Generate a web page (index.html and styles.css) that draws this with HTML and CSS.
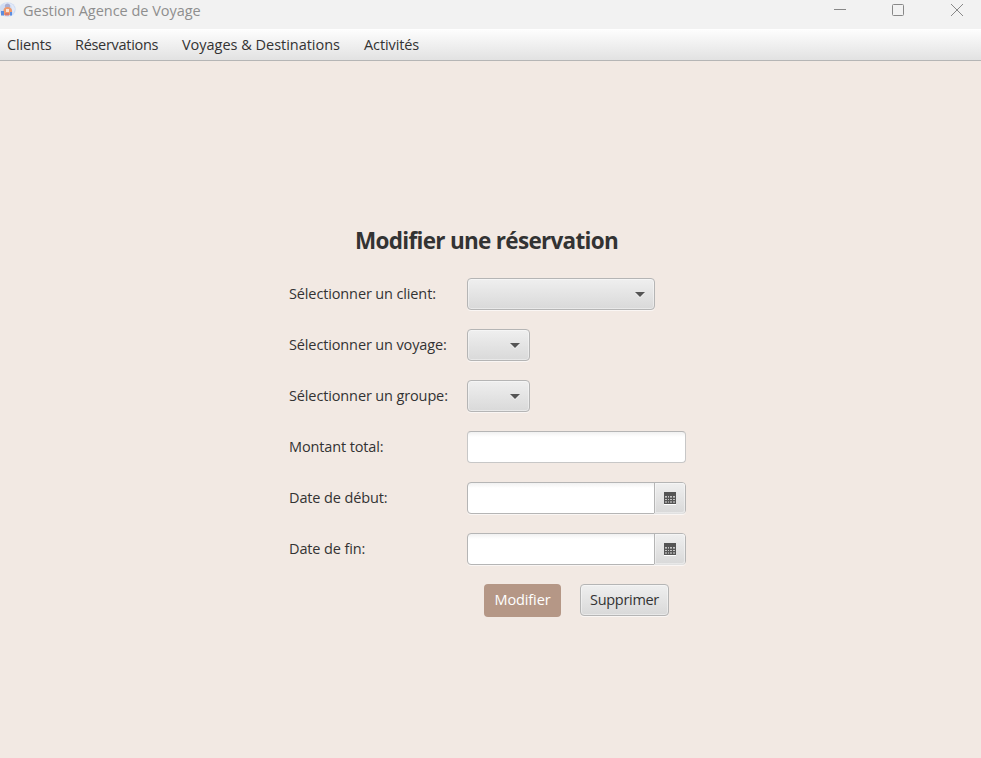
FILE: index.html
```
<!DOCTYPE html>
<html lang="fr">
<head>
<meta charset="utf-8">
<title>Gestion Agence de Voyage</title>
<link rel="stylesheet" href="styles.css">
</head>
<body>
<header class="titlebar">
  <svg class="app-icon" width="16" height="18" viewBox="0 0 16 18">
    <ellipse cx="7.500" cy="9.500" rx="8.200" ry="7.300" fill="#cfdcf3"/>
    <path d="M3 4.500Q8 1.500 13 5L15 9L13 14L11 5Z" fill="#e3e9f7"/>
    <circle cx="7.500" cy="6" r="2.600" fill="#a9aed2"/>
    <path d="M3.500 10Q4 7 7.500 7T12 10V15H3.500Z" fill="#ef9a6d"/>
    <path d="M6 9H9V12H6Z" fill="#f8e3da"/>
    <path d="M1 11H4V15.500H1ZM10 12H12V15.500H10Z" fill="#5b8de0"/>
    <path d="M5 13H9V15.500H5Z" fill="#d77870"/>
  </svg>
  <span class="app-title">Gestion Agence de Voyage</span>
  <svg class="window-controls" width="140" height="22" viewBox="0 0 140 22" fill="none" stroke="#888">
    <path d="M4 9.500H16"/>
    <rect x="62.500" y="4.500" width="11" height="11" rx="1"/>
    <path d="M121 4L133 16M133 4L121 16"/>
  </svg>
</header>
<nav class="menubar">
  <span class="menu clients">Clients</span>
  <span class="menu reservations">Réservations</span>
  <span class="menu voyages">Voyages &amp; Destinations</span>
  <span class="menu activites">Activités</span>
</nav>
<main class="content">
  <h1 class="heading">Modifier une réservation</h1>
  <form class="form">
    <label class="label">Sélectionner un client:</label>
    <div class="combo wide"><i class="arrow"></i></div>
    <label class="label">Sélectionner un voyage:</label>
    <div class="combo"><i class="arrow"></i></div>
    <label class="label">Sélectionner un groupe:</label>
    <div class="combo"><i class="arrow"></i></div>
    <label class="label">Montant total:</label>
    <div class="field"></div>
    <label class="label">Date de début:</label>
    <div class="field date"><div class="picker"><svg width="12" height="13" viewBox="0 0 12 13" shape-rendering="crispEdges"><path fill="#fff" d="M0 12h12v1H0z"/><path fill="#555" d="M0 0h12v12H0z"/><path fill="#c4c4c4" d="M1 4h2v1H1zM4 4h1v1H4zM6 4h2v1H6zM9 4h2v1H9zM1 7h2v1H1zM4 7h1v1H4zM6 7h2v1H6zM9 7h2v1H9z"/><path fill="#999" d="M1 5h2v1H1zM4 5h1v1H4zM6 5h2v1H6zM9 5h2v1H9zM1 9h2v2H1zM4 9h1v2H4zM6 9h2v2H6zM9 9h2v2H9z"/></svg></div></div>
    <label class="label">Date de fin:</label>
    <div class="field date"><div class="picker"><svg width="12" height="13" viewBox="0 0 12 13" shape-rendering="crispEdges"><path fill="#fff" d="M0 12h12v1H0z"/><path fill="#555" d="M0 0h12v12H0z"/><path fill="#c4c4c4" d="M1 4h2v1H1zM4 4h1v1H4zM6 4h2v1H6zM9 4h2v1H9zM1 7h2v1H1zM4 7h1v1H4zM6 7h2v1H6zM9 7h2v1H9z"/><path fill="#999" d="M1 5h2v1H1zM4 5h1v1H4zM6 5h2v1H6zM9 5h2v1H9zM1 9h2v2H1zM4 9h1v2H4zM6 9h2v2H6zM9 9h2v2H9z"/></svg></div></div>
    <div class="actions">
      <button class="button primary" type="button">Modifier</button>
      <button class="button" type="button">Supprimer</button>
    </div>
  </form>
</main>
</body>
</html>
```
FILE: styles.css
```
* { box-sizing: border-box; }
body {
  margin: 0;
  height: 758px;
  overflow: hidden;
  background: #f2e9e3;
  color: #333;
  font: 14.5px/20px "Open Sans", "Noto Sans", sans-serif;
  letter-spacing: -0.3px;
  white-space: nowrap;
}
.titlebar {
  display: flex;
  height: 29px;
  background: #f2f2f2;
  color: #8e8e8e;
}
.app-title { margin: 1px 0 0 7px; letter-spacing: -0.02px; }
.window-controls { margin-left: auto; margin-right: 11px; }
.menubar {
  display: flex;
  gap: 24px;
  height: 32px;
  padding: 5px 7px 0;
  background: linear-gradient(#fdfdfd, #e2e2e2);
  border-top: 1px solid #fff;
  border-bottom: 1px solid #b5b5b5;
}
.clients { width: 44px; letter-spacing: -0.15px; }
.reservations { width: 83px; }
.voyages { width: 158px; letter-spacing: -0.02px; }
.activites { letter-spacing: -0.1px; }
.content { width: 397px; margin: 163px 0 0 289px; }
.heading {
  margin: 0 0 21px 66px;
  font-size: 22.5px;
  line-height: 33px;
  font-weight: 700;
  letter-spacing: -0.7px;
}
.form {
  display: grid;
  grid-template-columns: 178px 219px;
  grid-auto-rows: 32px;
  row-gap: 19px;
}
.label { line-height: 32px; letter-spacing: -0.13px; }
.combo, .button, .picker {
  border: 1px solid #b5b5b5;
  border-radius: 4px;
  background: linear-gradient(#efefef, #d9d9d9);
  box-shadow: inset 0 0 0 1px rgba(255, 255, 255, .4), 0 1px 0 rgba(255, 255, 255, .6);
}
.combo {
  display: flex;
  align-items: center;
  justify-content: flex-end;
  width: 63px;
  padding-right: 9px;
}
.combo.wide { width: 188px; }
.arrow {
  border: 5px solid transparent;
  border-top-color: #555;
  border-bottom: 0;
  filter: drop-shadow(0 1px 0 #f4f4f4);
}
.field {
  border: 1px solid #c7c7c7;
  border-top-color: #b5b5b5;
  border-radius: 4px;
  background: linear-gradient(#f1f1f1, #fff 5px);
}
.date {
  display: flex;
  justify-content: flex-end;
  border-color: #b5b5b5;
  box-shadow: 0 1px 0 rgba(255, 255, 255, .6);
}
.picker {
  display: flex;
  align-items: center;
  justify-content: center;
  width: 31px;
  border-width: 0 0 0 1px;
  border-radius: 0 3px 3px 0;
}
.actions {
  grid-column: 2;
  display: flex;
  gap: 19px;
  padding-left: 17px;
}
.button {
  width: 89px;
  height: 32px;
  padding: 0 0 1px;
  font: inherit;
  color: #333;
  letter-spacing: inherit;
}
.button.primary {
  width: 77px;
  height: 33px;
  border: 0;
  background: #b59786;
  box-shadow: none;
  color: #fff;
  letter-spacing: -0.1px;
}
```
